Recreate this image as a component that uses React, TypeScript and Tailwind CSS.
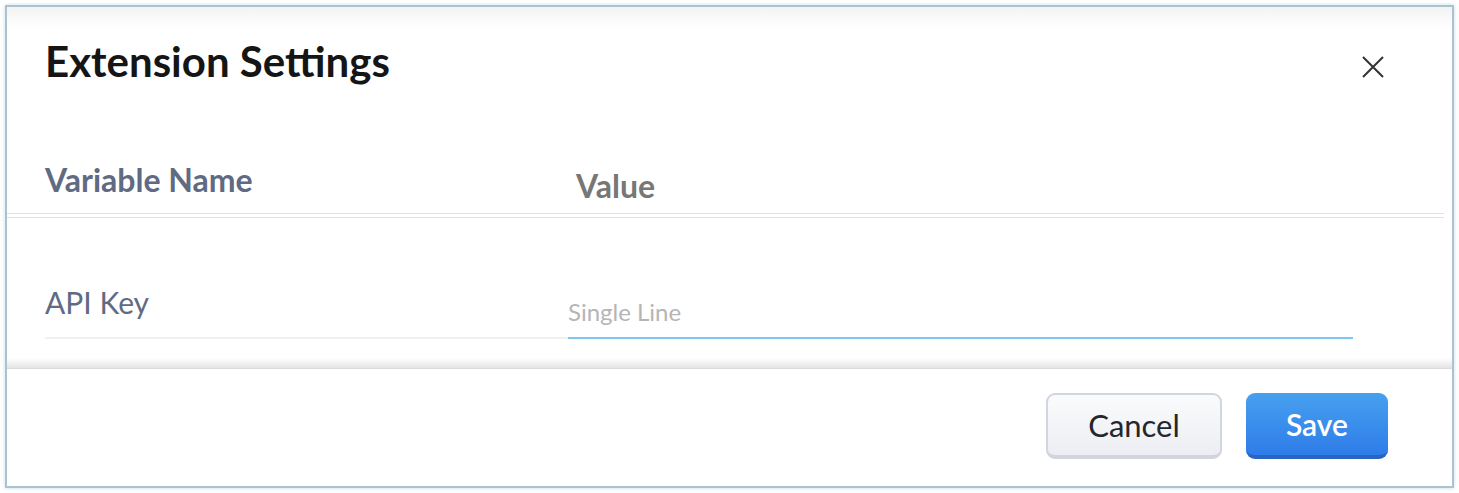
export default function App() {
  return (
    <div className="w-[1459px] h-[493px] bg-white p-[5px] font-['Lato','Liberation_Sans',sans-serif]">
      <div className="relative h-[483px] border-2 border-[#aac3d1] bg-white shadow-[0_0_4px_rgba(170,195,209,0.6)] flex flex-col">
        {/* header */}
        <div className="h-[110px] shrink-0 bg-gradient-to-b from-[#f3f3f3] to-white to-[20%] flex items-start justify-between pl-[38px] pr-[68px] pt-[33px]">
          <h1 className="text-[42px] font-bold leading-none text-[#151515]">Extension Settings</h1>
          <button className="mt-[16px] text-[#333]">
            <svg width="22" height="22" viewBox="0 0 22 22" fill="none" stroke="currentColor" strokeWidth="2">
              <path d="M1 1L21 21M21 1L1 21" />
            </svg>
          </button>
        </div>

        {/* body */}
        <div className="flex-1 flex flex-col">
          <div className="flex items-end h-[97px] pl-[38px] mr-[8px] border-b border-[#e2e2e2]">
            <div className="w-[531px] pb-[17px] text-[32px] font-bold text-[#5f6b82] leading-none">Variable Name</div>
            <div className="pb-[11px] text-[32px] font-bold text-[#777] leading-none">Value</div>
          </div>
          <div className="mt-[3px] mr-[8px] border-t border-[#e2e2e2]" />
          <div className="flex items-end h-[121px] pl-[38px]">
            <div className="w-[523px] border-b-2 border-[#f0f0f0] pb-[20px] text-[30px] text-[#5f6b82] leading-none">API Key</div>
            <input
              placeholder="Single Line"
              className="w-[785px] border-b-2 border-[#7dc9ee] pb-[11px] text-[24px] text-[#333] placeholder-[#b5b5b5] outline-none bg-transparent leading-none"
            />
          </div>
          <div className="mt-auto h-[10px] bg-gradient-to-b from-white to-[#e4e4e4]" />
        </div>

        {/* footer */}
        <div className="h-[118px] shrink-0 border-t border-[#dcdcdc] flex justify-end items-start pt-[24px] pr-[64px] gap-[24px]">
          <button className="w-[176px] h-[66px] rounded-[9px] border-2 border-b-[4px] border-[#d2d5de] bg-gradient-to-b from-[#fafbfc] to-[#eceef3] text-[31px] text-[#23262d] leading-none">
            Cancel
          </button>
          <button className="w-[142px] h-[66px] rounded-[9px] border-b-[4px] border-[#2b63c2] bg-gradient-to-b from-[#47a0ee] to-[#2f7ce9] text-[30px] font-semibold text-white leading-none">
            Save
          </button>
        </div>
      </div>
    </div>
  )
}
